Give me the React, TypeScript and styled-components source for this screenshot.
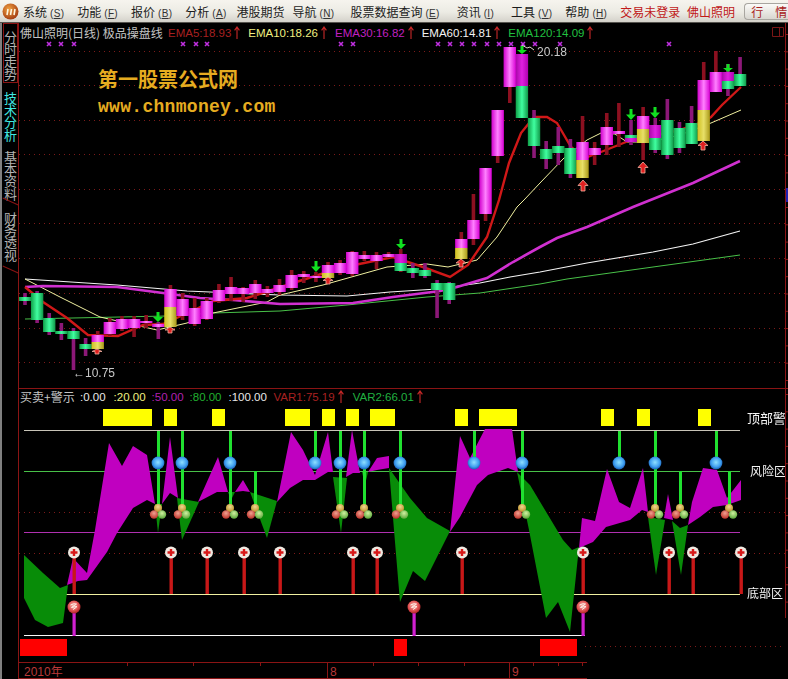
import React from 'react';
import styled, { createGlobalStyle } from 'styled-components';

const GlobalStyle = createGlobalStyle`
  html, body {
    margin: 0;
    padding: 0;
    background: #000;
  }
`;

const Window = styled.div`
  width: 788px;
  height: 679px;
  overflow: hidden;
  background: #000;
  font-family: 'Liberation Sans', 'Noto Sans CJK SC', sans-serif;
`;

const MenuBar = styled.div`
  height: 23px;
  box-sizing: border-box;
  display: flex;
  align-items: center;
  overflow: hidden;
  padding-left: 2px;
  background: linear-gradient(#f6f4ee, #ecebe4 55%, #d4d2ca);
  border-bottom: 1px solid #55534e;
`;

const MenuItem = styled.span<{ $gap: number }>`
  margin-right: ${({ $gap }) => $gap}px;
  font-size: 12px;
  white-space: nowrap;
  color: #1c1c1c;
  font-family: 'Noto Sans CJK SC', sans-serif;
`;

const HotKey = styled.span`
  margin-left: 3px;
  font-size: 10px;
  letter-spacing: 0.3px;
  font-family: 'Liberation Sans', sans-serif;
  color: #333;
`;

const LoginText = styled.span`
  width: 124px;
  flex: none;
  font-size: 12px;
  word-spacing: 4px;
  white-space: nowrap;
  color: #c01818;
  font-family: 'Noto Sans CJK SC', sans-serif;
`;

const QuoteButton = styled.div`
  flex: none;
  display: flex;
  gap: 12px;
  width: 44px;
  height: 17px;
  box-sizing: border-box;
  padding-left: 6px;
  border: 1px solid #a8a6a0;
  border-right: none;
  border-radius: 4px 0 0 4px;
  font-size: 12px;
  line-height: 15px;
  color: #a82020;
  background: linear-gradient(#fbfbf8, #d8d6d0);
  font-family: 'Noto Sans CJK SC', sans-serif;
`;

const Body = styled.div`
  display: flex;
  height: 656px;
`;

const SideTabs = styled.div`
  width: 19px;
  flex: none;
  box-sizing: border-box;
  padding-left: 1px;
  border-left: 2px solid #808080;
  border-right: 1px solid #8a1414;
  background: #000;
`;

const SideTab = styled.div<{ $active?: boolean; $h: number; $pad: number; $boxed?: boolean; $slant?: boolean }>`
  position: relative;
  height: ${({ $h }) => $h}px;
  box-sizing: border-box;
  width: 15px;
  padding-top: ${({ $pad }) => $pad}px;
  font-size: 13px;
  line-height: 12.2px;
  text-align: center;
  color: ${({ $active }) => ($active ? '#40e8e0' : '#b4b4b4')};
  font-family: 'Noto Sans CJK SC', sans-serif;
  border: ${({ $boxed }) => ($boxed ? '1px solid #8a1414' : 'none')};
  &::after {
    content: '';
    display: ${({ $slant }) => ($slant ? 'block' : 'none')};
    position: absolute;
    left: -1px;
    bottom: 3px;
    width: 17px;
    height: 1px;
    background: #8a1414;
    transform: rotate(24deg);
  }
`;

const ChartColumn = styled.div`
  flex: 1;
  display: flex;
  flex-direction: column;
`;

const MainPane = styled.div`
  position: relative;
  height: 366px;
  flex: none;
  box-sizing: border-box;
  border-bottom: 1px solid #8a1414;
`;

const IndicatorPane = styled.div`
  position: relative;
  height: 273px;
  flex: none;
`;

const Canvas = styled.svg`
  position: absolute;
  left: 0;
  top: 0;
  display: block;
  filter: blur(0.35px);
`;

const AxisBar = styled.svg`
  display: block;
  flex: none;
`;

const LegendRow = styled.div<{ $top: number }>`
  position: relative;
  display: flex;
  align-items: center;
  height: 15px;
  padding-top: ${({ $top }) => $top}px;
  white-space: nowrap;
  font-size: 11.5px;
`;

const LegendTitle = styled.span<{ $width: number }>`
  width: ${({ $width }) => $width}px;
  flex: none;
  padding-left: 1px;
  box-sizing: border-box;
  color: #c4c4c4;
  font-size: 12px;
  font-family: 'Noto Sans CJK SC', sans-serif;
`;

const LegendValue = styled.span<{ $color: string; $gap: number }>`
  color: ${({ $color }) => $color};
  margin-right: ${({ $gap }) => $gap}px;
`;

const ArrowIcon = styled.svg<{ $gap: number }>`
  flex: none;
  margin-left: 3px;
  margin-right: ${({ $gap }) => $gap}px;
`;

const Watermark = styled.div`
  position: relative;
  margin: 28px 0 0 79px;
  color: #e6ac20;
`;

const WatermarkTitle = styled.div`
  font-size: 20px;
  line-height: 22px;
  font-weight: 700;
  font-family: 'Noto Sans CJK SC', sans-serif;
`;

const WatermarkUrl = styled.div`
  margin-top: 8px;
  font-size: 18px;
  line-height: 18px;
  font-weight: 700;
  letter-spacing: 0.3px;
  font-family: 'Liberation Mono', monospace;
`;

const ChartLabel = styled.text<{ $size: number }>`
  font-size: ${({ $size }) => $size}px;
  font-family: 'Liberation Sans', 'Noto Sans CJK SC', sans-serif;
`;

const menu: [string, string | null, number][] = [
  ['系统', 'S', 13],
  ['功能', 'F', 13],
  ['报价', 'B', 13],
  ['分析', 'A', 10],
  ['港股期货', null, 8],
  ['导航', 'N', 16],
  ['股票数据查询', 'E', 17],
  ['资讯', 'I', 17],
  ['工具', 'V', 13],
  ['帮助', 'H', 13],
];

const pts = (p: number[][]) => p.map((q) => q.join(',')).join(' ');
const cx = (i: number) => 25 + 12.12 * i;

const gridY = [51, 85, 120, 154, 189, 223, 258, 293, 328, 362];

const ema5 = [[25,287],[43,302],[67,318],[88,335],[118,336],[143,325],[163,324],[190,312],[213,301],[247,298],[290,284],[340,268],[393,257],[420,266],[450,277],[468,265],[487,237],[499,200],[509,163],[521,133],[534,117],[547,117],[557,123],[571,147],[585,158],[601,152],[621,144],[631,140],[647,137],[680,130],[703,122],[711,117],[722,105],[741,87]];
const ema10 = [[25,279],[60,297],[100,317],[157,330],[187,323],[213,313],[267,302],[280,295],[323,285],[387,267],[427,264],[448,267],[477,260],[497,237],[517,207],[524,200],[540,183],[564,158],[587,140],[601,133],[615,134],[627,142],[650,142],[680,135],[711,123],[741,110]];
const ema30 = [[25,287],[43,286],[117,287],[163,293],[200,298],[233,300],[280,304],[353,303],[393,297],[440,291],[457,287],[487,278],[513,262],[540,247],[557,238],[587,227],[633,207],[693,183],[740,161]];
const ema60 = [[25,279],[117,285],[187,291],[233,293],[280,295],[347,296],[390,292],[437,289],[480,283],[510,277],[540,272],[587,263],[653,252],[693,244],[740,231]];
const ema120 = [[25,319],[167,316],[213,313],[280,311],[347,305],[427,297],[480,293],[540,284],[567,279],[653,267],[740,255]];

type Seg = ['m' | 'g' | 'y' | 'd', number, number];
type CandleRow = [number, number, string, Seg[]];

const P = '#8c1878';
const R = '#8c1020';

// wick top, wick bottom, wick colour, body segments; index is the bar number
const candles: CandleRow[] = [
  [293,305,P,[['g',297,301]]],
  [291,323,P,[['g',293,320]]],
  [313,335,P,[['g',318,332]]],
  [323,340,P,[['g',331,334]]],
  [328,370,P,[['g',331,339]]],
  [338,356,P,[['g',344,349]]],
  [331,349,R,[['m',335,342],['y',342,349]]],
  [318,336,R,[['m',322,334]]],
  [316,331,R,[['m',319,329]]],
  [316,337,R,[['m',319,328]]],
  [315,328,R,[['m',321,323]]],
  [322,339,P,[['m',324,327]]],
  [285,327,R,[['m',289,307],['y',307,327]]],
  [293,320,R,[['m',299,316]]],
  [298,326,R,[['m',308,324]]],
  [298,320,R,[['m',301,319]]],
  [284,303,R,[['m',290,301]]],
  [277,301,R,[['m',287,294]]],
  [287,302,R,[['m',288,294]]],
  [280,299,R,[['m',284,293]]],
  [286,297,R,[['m',289,293]]],
  [279,295,R,[['m',285,292]]],
  [270,290,R,[['m',275,288]]],
  [271,283,R,[['m',274,277]]],
  [272,282,R,[['m',276,278]]],
  [262,278,R,[['m',265,273],['y',273,278]]],
  [260,275,R,[['m',263,273]]],
  [251,276,R,[['m',252,274]]],
  [251,261,R,[['m',255,259]]],
  [252,269,R,[['m',255,261]]],
  [252,258,R,[['m',254,257]]],
  [249,272,R,[['d',254,263],['g',263,271]]],
  [263,278,P,[['g',268,273]]],
  [263,278,P,[['g',270,276]]],
  [280,318,P,[['g',283,290]]],
  [282,304,P,[['g',283,300]]],
  [232,259,R,[['m',239,248],['y',248,259]]],
  [194,245,R,[['m',220,239]]],
  [168,221,R,[['m',168,214]]],
  [110,163,R,[['m',110,156]]],
  [47,103,R,[['m',47,87]]],
  [54,118,P,[['d',54,86],['g',86,118]]],
  [110,158,P,[['g',118,146]]],
  [141,169,P,[['g',149,159]]],
  [127,165,P,[['g',146,153]]],
  [139,178,P,[['g',148,174]]],
  [116,178,R,[['m',142,160],['y',160,178]]],
  [142,165,R,[['m',148,155]]],
  [113,155,R,[['m',127,145]]],
  [103,147,R,[['m',131,134]]],
  [120,145,P,[['g',135,138],['d',138,142]]],
  [107,160,R,[['m',116,129],['y',129,143]]],
  [118,153,P,[['d',125,138],['g',138,150]]],
  [99,159,P,[['g',120,155]]],
  [122,153,P,[['g',128,148]]],
  [106,144,P,[['g',123,144]]],
  [62,141,R,[['m',80,110],['y',110,141]]],
  [51,92,R,[['m',72,92]]],
  [64,96,P,[['d',72,81],['g',81,89]]],
  [57,86,P,[['g',74,86]]],
];

const crossMarks = [49,61,74,183,196,207,341,353,438,450,462,474,487,499,511,523,535,560,669];
const downArrows = [[158,312,322],[316,261,272],[401,239,249],[522,46,54],[631,109,120],[655,107,118],[728,64,72]];
const upArrows = [[97,349,354],[170,327,333],[328,277,284],[461,259,267],[583,180,191],[643,162,173],[703,141,150]];

const bodyFill: Record<string, string> = {
  m: 'url(#bodyMagenta)',
  g: 'url(#bodyGreen)',
  y: 'url(#bodyYellow)',
  d: 'url(#bodyDark)',
};

const Stop = ({ o, c }: { o: string; c: string }) => <stop offset={o} stopColor={c} />;

const BarGradient = ({ id, edge, mid, far }: { id: string; edge: string; mid: string; far: string }) => (
  <linearGradient id={id} x1="0" x2="1" y1="0" y2="0">
    <Stop o="0" c={edge} />
    <Stop o="0.5" c={mid} />
    <Stop o="1" c={far} />
  </linearGradient>
);

const TrendArrow = ({ gap }: { gap: number }) => (
  <ArrowIcon $gap={gap} width="6" height="13" viewBox="0 0 6 13">
    <path d="M3 1v12M.6 4.4L3 1l2.4 3.4" fill="none" stroke="#c82828" strokeWidth="1.1" />
  </ArrowIcon>
);

const DownArrow = ({ x, top, bottom }: { x: number; top: number; bottom: number }) => {
  const neck = bottom - (bottom - top) * 0.5;
  return (
    <path
      d={`M${x - 1.5} ${top}H${x + 1.5}V${neck}H${x + 5}L${x} ${bottom}L${x - 5} ${neck}H${x - 1.5}Z`}
      fill="#10e020"
    />
  );
};

const UpArrow = ({ x, top, bottom }: { x: number; top: number; bottom: number }) => {
  const neck = top + (bottom - top) * 0.5;
  return (
    <path
      d={`M${x} ${top}L${x + 5} ${neck}H${x + 2}V${bottom}H${x - 2}V${neck}H${x - 5}Z`}
      fill="#e02020"
      stroke="#f0b0a0"
      strokeWidth="0.8"
    />
  );
};

const PriceChart = () => (
  <Canvas width={769} height={365} viewBox="19 23 769 365">
    <defs>
      <BarGradient id="bodyMagenta" edge="#d000cc" mid="#ff80ff" far="#d800d4" />
      <BarGradient id="bodyGreen" edge="#10a048" mid="#40ffa0" far="#109848" />
      <BarGradient id="bodyYellow" edge="#d0c020" mid="#e8e068" far="#a89818" />
      <BarGradient id="bodyDark" edge="#a808a8" mid="#e020e0" far="#b000b0" />
    </defs>
    {gridY.map((y) => (
      <line key={y} x1={19} x2={785} y1={y + 0.5} y2={y + 0.5} stroke="#7c1a1a" strokeDasharray="1 4" />
    ))}
    {crossMarks.map((x) => (
      <path key={x} d={`M${x - 2} 42l4 4M${x + 2} 42l-4 4`} stroke="#c030e0" strokeWidth="1.6" />
    ))}
    <polyline points={pts(ema120)} fill="none" stroke="#48c048" strokeWidth="1" />
    <polyline points={pts(ema60)} fill="none" stroke="#f4f4f4" strokeWidth="1.2" />
    <polyline points={pts(ema10)} fill="none" stroke="#f0f0a0" strokeWidth="1" />
    <polyline points={pts(ema30)} fill="none" stroke="#d030d0" strokeWidth="2.6" />
    <polyline points={pts(ema5)} fill="none" stroke="#d01818" strokeWidth="2.4" />
    {candles.map(([top, bottom, wick, segs], i) => (
      <g key={i}>
        <rect x={cx(i) - 1.8} y={top} width={3.6} height={bottom - top} fill={wick} />
        {segs.map(([k, a, b]) => (
          <rect key={k + a} x={cx(i) - 6.2} y={a} width={12.4} height={b - a} fill={bodyFill[k]} />
        ))}
      </g>
    ))}
    {downArrows.map(([x, a, b]) => (
      <DownArrow key={x} x={x} top={a} bottom={b} />
    ))}
    {upArrows.map(([x, a, b]) => (
      <UpArrow key={x} x={x} top={a} bottom={b} />
    ))}
    <path d="M522 45l5 3 3-1 4 3" fill="none" stroke="#d8d8c8" strokeWidth="1" />
    <ChartLabel $size={12} x={537} y={56} fill="#c8c8c8">20.18</ChartLabel>
    <ChartLabel $size={12} x={73} y={377} fill="#c8c8c8">←10.75</ChartLabel>
    <path d="M772.5 27.5h11v9h-11zM779.5 27.5v9" fill="none" stroke="#7a1616" />
    <line x1={785.5} x2={785.5} y1={23} y2={388} stroke="#8a1414" />
    {Array.from({ length: 21 }, (_, k) => (
      <line key={k} x1={785} x2={788} y1={34.5 + k * 17.3} y2={34.5 + k * 17.3} stroke="#8a1414" />
    ))}
    <rect x={786} y={188} width={2} height={14} fill="#2020b0" />
  </Canvas>
);

const magentaAreas = [
  [[67,585],[73,558],[87,573],[95,530],[109,443],[122,466],[133,446],[147,455],[155,504],[147,500],[133,508],[117,533],[107,552],[87,580],[78,581]],
  [[162,504],[170,437],[178,498],[170,493]],
  [[198,502],[218,457],[228,492],[217,492]],
  [[235,492],[243,480],[250,492],[243,491]],
  [[277,502],[291,432],[303,450],[315,475],[328,432],[333,472],[328,472],[315,480],[303,480],[290,488]],
  [[346,477],[352,430],[360,473],[353,473]],
  [[368,472],[377,458],[389,456],[389,468],[377,470]],
  [[450,532],[460,436],[470,458],[485,429],[512,429],[518,472],[508,468],[488,475],[477,485],[460,517]],
  [[579,548],[582,518],[595,521],[607,469],[619,502],[630,508],[643,468],[648,512],[642,510],[630,520],[606,527],[593,542]],
  [[664,518],[668,494],[673,520]],
  [[688,525],[692,502],[703,468],[717,470],[727,498],[741,480],[741,500],[727,505],[713,507],[700,517]],
];

const greenAreas = [
  [[24,555],[43,573],[60,588],[68,585],[63,623],[48,627],[35,620],[24,598]],
  [[155,504],[162,504],[158,533]],
  [[177,498],[199,502],[182,540]],
  [[228,492],[235,492],[231,500]],
  [[250,492],[277,501],[267,538]],
  [[333,477],[347,478],[341,533]],
  [[362,472],[368,472],[365,485]],
  [[389,468],[410,498],[427,518],[450,531],[425,581],[413,571],[400,602],[394,530]],
  [[517,472],[530,485],[563,540],[572,550],[579,547],[570,632],[558,602],[546,618],[529,530]],
  [[648,517],[665,520],[656,575]],
  [[672,521],[680,528],[688,525],[681,575]],
];

const yellowBlocks = [[103,152],[164,177],[212,225],[285,310],[322,335],[346,359],[370,395],[455,468],[479,517],[601,614],[637,650],[698,711]];
const redBlocks = [[20,67],[394,407],[540,577]];
const sphereStems = [[158,true],[182,true],[230,true],[315,false],[340,true],[364,true],[400,true],[474,false],[522,true],[619,false],[655,true],[716,false]] as [number, boolean][];
const lowStems = [255,680,729];
const clusters = [158,182,230,255,340,364,400,522,655,680,729];
const buyPins = [74,171,207,244,280,353,377,462,583,669,693,741];
const warnPins = [74,414,583];

const GlassBall = ({ x, y, r, fill }: { x: number; y: number; r: number; fill: string }) => (
  <circle cx={x} cy={y} r={r} fill={`url(#${fill})`} />
);

const IndicatorChart = () => (
  <Canvas width={769} height={273} viewBox="19 389 769 273">
    <defs>
      <radialGradient id="ballBlue" cx="0.5" cy="0.45" r="0.6">
        <Stop o="0" c="#8fe0ff" />
        <Stop o="0.6" c="#40a0f0" />
        <Stop o="1" c="#1050a8" />
      </radialGradient>
      <radialGradient id="ballPink" cx="0.45" cy="0.4" r="0.65">
        <Stop o="0" c="#f8b8b0" />
        <Stop o="0.6" c="#e05050" />
        <Stop o="1" c="#a01818" />
      </radialGradient>
      <radialGradient id="ballOrange" cx="0.5" cy="0.35" r="0.7">
        <Stop o="0" c="#f0d890" />
        <Stop o="1" c="#b88820" />
      </radialGradient>
      <radialGradient id="ballRed" cx="0.5" cy="0.35" r="0.7">
        <Stop o="0" c="#f0a090" />
        <Stop o="1" c="#b82820" />
      </radialGradient>
      <radialGradient id="ballGreen" cx="0.5" cy="0.35" r="0.7">
        <Stop o="0" c="#d0f0a0" />
        <Stop o="1" c="#50a030" />
      </radialGradient>
    </defs>
    <line x1={19} x2={785} y1={512.5} y2={512.5} stroke="#7c1a1a" strokeDasharray="1 4" />
    <line x1={19} x2={785} y1={553.5} y2={553.5} stroke="#7c1a1a" strokeDasharray="1 4" />
    <line x1={585} x2={785} y1={646.5} y2={646.5} stroke="#7c1a1a" strokeDasharray="1 4" />
    <line x1={24} x2={740} y1={430.5} y2={430.5} stroke="#c8c4b8" />
    <line x1={24} x2={740} y1={471.5} y2={471.5} stroke="#48c048" />
    <line x1={24} x2={740} y1={532.5} y2={532.5} stroke="#b030b0" />
    <line x1={24} x2={740} y1={594.5} y2={594.5} stroke="#f0f0a0" />
    <line x1={24} x2={585} y1={635.5} y2={635.5} stroke="#f8f8f8" />
    {greenAreas.map((a, i) => (
      <polygon key={i} points={pts(a)} fill="#088c08" />
    ))}
    {magentaAreas.map((a, i) => (
      <polygon key={i} points={pts(a)} fill="#c000c0" />
    ))}
    {yellowBlocks.map(([a, b]) => (
      <rect key={a} x={a} y={409} width={b - a} height={17} fill="#ffff00" />
    ))}
    {redBlocks.map(([a, b]) => (
      <rect key={a} x={a} y={639} width={b - a} height={17} fill="#ff0000" />
    ))}
    {sphereStems.map(([x, long]) => (
      <rect key={x} x={x - 1} y={431} width={3} height={long ? 77 : 32} fill="#20e030" />
    ))}
    {lowStems.map((x) => (
      <rect key={x} x={x - 1} y={471} width={3} height={37} fill="#20e030" />
    ))}
    {clusters.map((x) => (
      <g key={x}>
        <GlassBall x={x} y={508} r={4} fill="ballOrange" />
        <GlassBall x={x - 4} y={514.5} r={4.2} fill="ballRed" />
        <GlassBall x={x + 4} y={514.5} r={4.2} fill="ballGreen" />
      </g>
    ))}
    {sphereStems.map(([x]) => (
      <GlassBall key={x} x={x} y={463} r={6.4} fill="ballBlue" />
    ))}
    {buyPins.map((x) => (
      <g key={x}>
        <rect x={x - 1.5} y={555} width={3.4} height={39} fill="#c81818" />
        <circle cx={x} cy={552.5} r={6} fill="#efe8e0" />
        <path d={`M${x - 3.5} 552.5h7M${x} 549v7`} stroke="#d81818" strokeWidth="2.4" />
      </g>
    ))}
    {warnPins.map((x) => (
      <g key={x}>
        <rect x={x - 1.5} y={610} width={3.2} height={26} fill="#d020d0" />
        <GlassBall x={x} y={607} r={6.5} fill="ballPink" />
        <path d={`M${x - 3.5} 605q3.5-2 6-1q-3 2-5 3.5q4-1 5.5-1q-2 2-4 3`} fill="none" stroke="#fff0e8" strokeWidth="1" />
      </g>
    ))}
    <ChartLabel $size={13} x={747} y={423} fill="#f4f4f4">顶部警</ChartLabel>
    <ChartLabel $size={12} x={750} y={476} fill="#f4f4f4">风险区</ChartLabel>
    <ChartLabel $size={12} x={747} y={598} fill="#f4f4f4">底部区</ChartLabel>
    <line x1={785.5} x2={785.5} y1={389} y2={618} stroke="#8a1414" />
    {Array.from({ length: 13 }, (_, k) => (
      <line key={k} x1={785} x2={788} y1={394.5 + k * 17.3} y2={394.5 + k * 17.3} stroke="#8a1414" />
    ))}
  </Canvas>
);

const minorTicks = [127,193,260,373,418,464,533,558,582];

const TimeAxis = () => (
  <AxisBar width={769} height={17} viewBox="19 662 769 17">
    <path d="M19 662.5H587M19 678.5H587" stroke="#8a1414" fill="none" />
    {minorTicks.map((x) => (
      <line key={x} x1={x + 0.5} x2={x + 0.5} y1={662} y2={666} stroke="#8a1414" />
    ))}
    <path d="M327.5 662v17M509.5 662v17" stroke="#8a1414" />
    <ChartLabel $size={12} x={24} y={676} fill="#b83838">2010年</ChartLabel>
    <ChartLabel $size={12} x={330} y={676} fill="#b83838">8</ChartLabel>
    <ChartLabel $size={12} x={512} y={676} fill="#b83838">9</ChartLabel>
  </AxisBar>
);

const Logo = () => (
  <svg width="17" height="17" viewBox="0 0 17 17" style={{ flex: 'none', marginRight: 4 }}>
    <defs>
      <radialGradient id="logoDisc" cx="0.4" cy="0.35" r="0.7">
        <stop offset="0" stopColor="#f0a040" />
        <stop offset="1" stopColor="#a03810" />
      </radialGradient>
    </defs>
    <circle cx="8.5" cy="8.5" r="8" fill="url(#logoDisc)" />
    <path d="M5 12l1-6M8.5 12l1-6M12 12l1-6" stroke="#fff6e0" strokeWidth="1.6" />
  </svg>
);

const App = () => (
  <Window>
    <GlobalStyle />
    <MenuBar>
      <Logo />
      {menu.map(([label, key, gap]) => (
        <MenuItem key={label} $gap={gap}>
          {label}
          {key && (
            <HotKey>
              (<u>{key}</u>)
            </HotKey>
          )}
        </MenuItem>
      ))}
      <LoginText>交易未登录 佛山照明</LoginText>
      <QuoteButton>
        <span>行</span>
        <span>情</span>
      </QuoteButton>
    </MenuBar>
    <Body>
      <SideTabs>
        <SideTab $h={60} $pad={7} $boxed>分时走势</SideTab>
        <SideTab $h={62} $pad={9} $active>技术分析</SideTab>
        <SideTab $h={60} $pad={6} $slant>基本资料</SideTab>
        <SideTab $h={68} $pad={7} $slant>财务透视</SideTab>
      </SideTabs>
      <ChartColumn>
        <MainPane>
          <PriceChart />
          <LegendRow $top={2}>
            <LegendTitle $width={149}>佛山照明(日线) 极品操盘线</LegendTitle>
            <LegendValue $color="#a82020" $gap={0}>EMA5:18.93</LegendValue>
            <TrendArrow gap={8} />
            <LegendValue $color="#f0f080" $gap={0}>EMA10:18.26</LegendValue>
            <TrendArrow gap={8} />
            <LegendValue $color="#c020c0" $gap={0}>EMA30:16.82</LegendValue>
            <TrendArrow gap={8} />
            <LegendValue $color="#f4f4f4" $gap={0}>EMA60:14.81</LegendValue>
            <TrendArrow gap={8} />
            <LegendValue $color="#20c040" $gap={0}>EMA120:14.09</LegendValue>
            <TrendArrow gap={0} />
          </LegendRow>
          <Watermark>
            <WatermarkTitle>第一股票公式网</WatermarkTitle>
            <WatermarkUrl>www.chnmoney.com</WatermarkUrl>
          </Watermark>
        </MainPane>
        <IndicatorPane>
          <IndicatorChart />
          <LegendRow $top={0}>
            <LegendTitle $width={61}>买卖+警示</LegendTitle>
            <LegendValue $color="#e8e8e8" $gap={8}>:0.00</LegendValue>
            <LegendValue $color="#f0f080" $gap={6}>:20.00</LegendValue>
            <LegendValue $color="#b020b0" $gap={6}>:50.00</LegendValue>
            <LegendValue $color="#20b030" $gap={7}>:80.00</LegendValue>
            <LegendValue $color="#e8e8e8" $gap={6.6}>:100.00</LegendValue>
            <LegendValue $color="#a82020" $gap={0}>VAR1:75.19</LegendValue>
            <TrendArrow gap={9} />
            <LegendValue $color="#20b040" $gap={0}>VAR2:66.01</LegendValue>
            <TrendArrow gap={0} />
          </LegendRow>
        </IndicatorPane>
        <TimeAxis />
      </ChartColumn>
    </Body>
  </Window>
);

export default App;
